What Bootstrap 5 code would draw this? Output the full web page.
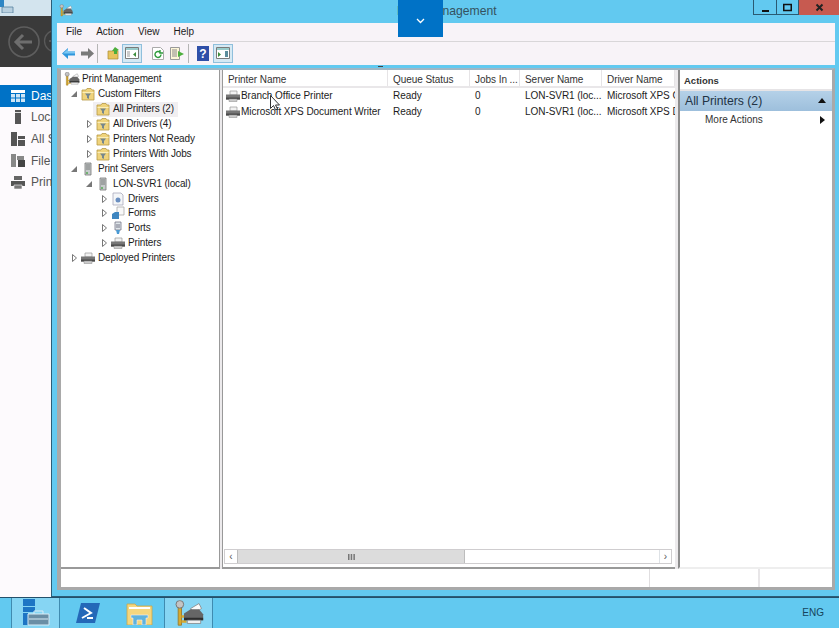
<!DOCTYPE html>
<html lang="en"><head><meta charset="utf-8"><title>Print Management</title>
<link href="https://cdn.jsdelivr.net/npm/bootstrap@5.3.0/dist/css/bootstrap.min.css" rel="stylesheet">
<style>
html,body{height:628px;width:839px;overflow:hidden}
body{font-family:"Liberation Sans",Arial,sans-serif;font-size:10px;color:#1c1c1c;background:#62c9f0;line-height:1}
.desk{height:597px;position:relative}
.side{width:51px;background:#fdfafd;overflow:hidden;white-space:nowrap;font-size:12px;color:#555}
.side-top{height:16px;background:#d3e4ee}
.side-dark{height:51px;background:#3a3a3a;padding:9px 0 0 7px;gap:2px}
.side-nav{padding-top:18px}
.side-row{height:21.6px;padding-left:11px;gap:6px}
.side-row.on{background:#0072c6;color:#fff}
.win{width:788px;background:#62c9f0;border-left:1px solid #2b5d78;border-bottom:1px solid #2b5d78;padding:0 4px 6px 5px}
.titlebar{height:23px;position:relative;font-size:12.2px;color:#34525f}
.appicon{margin:4px 0 0 2px}
.wintitle{position:absolute;left:340px;top:5px}
.caps{margin-right:-4px;margin-left:auto;height:15px}
.cap{height:15px;border:1px solid #2a5a72;border-top:0;background:#62c9f0}
.cap+.cap{border-left:0}
.cap.min{width:24px}.cap.max{width:22px}.cap.cl{width:40px;background:#c75a50;border:0}
.menubar{height:19px;background:#f8f3f8;padding-left:9px;gap:14px;border-bottom:1px solid #d9d6d9}
.toolbar{height:23px;background:#f8f3f8;padding-left:4px}
.tb-sep{width:1px;height:19px;background:#b5b5b5}
.tb-on{width:20px;height:19px;background:#d6e9f4;border:1px solid #90bfdc}
.panes{height:502px;margin-top:3px;background:#eceaec;border:solid #a9a9a9;border-width:2px 3px 0 4px;border-top-color:#9fb6c4}
.tree{width:159px;background:#fff;padding:2px 0 0 3px;border-right:1px solid #999;border-bottom:2px solid #999;letter-spacing:-.15px}
.tr{height:14.92px;white-space:nowrap}
.tw{width:8px;flex:none;display:flex;align-items:center;justify-content:center}
.l1{padding-left:6px}.l2{padding-left:21px}.l3{padding-left:36px}
.tic{width:14px;height:14px;flex:none;margin:0 3px}
.sel{background:#f1eff1;width:85px;height:15px}
.list{width:453px;margin-left:2px;background:#fff;border-left:1px solid #999;border-bottom:2px solid #999;position:relative;overflow:hidden;letter-spacing:-.05px}
.cols{display:grid;grid-template-columns:165px 82px 50px 82px 73px}
.head{height:18px;border-bottom:2px solid #e9e7e9;color:#333}
.head>div{border-right:1px solid #e6e4e6;padding:5px 0 0 5px;overflow:hidden;white-space:nowrap}
.rowx{height:16px;white-space:nowrap}
.rowx>div{padding-left:5px;overflow:hidden;display:flex;align-items:center}
.rowx>div:first-child{padding-left:3px}
.rowx svg{margin-right:1px;flex:none}
.sbar{position:absolute;left:1px;right:3px;bottom:3px;height:15px;background:#fff;border:1px solid #cfcdcf}
.sb-btn{width:12px;color:#555;font-size:10px}
.sb-thumb{width:228px;background:#dcdcdc;border:1px solid #bdbdbd;border-width:0 1px}
.actions{width:154px;margin-left:3px;background:#fff;border-left:2px solid #8d8d8d;border-bottom:2px solid #eee}
.act-h{height:21px;padding:6px 0 0 4px;font-weight:700;font-size:9.5px;border-bottom:2px solid #e6e4e6;color:#333}
.act-sel{height:20px;padding:0 6px 0 5px;background:linear-gradient(#b5d1e8,#9dbfdc);font-size:12.2px;color:#234}
.act-row{height:19px;padding:0 6px 0 25px;color:#333}
.statusbar{height:18px;background:#fff;border:solid #a9a9a9;border-width:0 3px 3px 4px;box-sizing:content-box}
.st1{width:589px;border-right:1px solid #e0dee0}.st2{width:110px;border-right:2px solid #e8e6e8}
.task{height:31px;background:#62c9f0;border-top:1px solid #23506b;padding-left:11px}
.tk{width:49px;height:30px}
.tk.on{background:#86d5f3;border-left:1px solid #3f8bb0;border-right:1px solid #3f8bb0}
.tk.mid{width:55px}
.eng{margin-left:auto;margin-right:15px;color:#16445c}
.drop{position:absolute;left:398px;top:0;width:45px;height:37px;background:#0072c6;z-index:3}
.cursor{position:absolute;left:47px;top:25px;z-index:2}
.tick{position:absolute;left:378px;top:66px;width:5px;height:1px;background:#444}
</style></head><body class="d-flex flex-column">
<svg width="0" height="0" class="position-absolute">
<defs>
<symbol id="ff" viewBox="0 0 14 14"><path d="M1 3h4l1-1.500h4L11 3h2v10H1z" fill="#efd37c" stroke="#b89a45" stroke-width=".8"/><path d="M1.500 5h11v1h-11z" fill="#fbeeb8"/><path d="M4 6.500h6L8 9v3l-2-1V9z" fill="#76878e"/></symbol>
<symbol id="pr" viewBox="0 0 14 14"><path d="M4 2h7v4H4z" fill="#f2f2f2" stroke="#999" stroke-width=".7"/><path d="M0 5.500h14v5H0z" fill="#777"/><path d="M0 8.500h14v2H0z" fill="#4a4a4a"/><path d="M3 10h8v2.500H3z" fill="#ccc" stroke="#888" stroke-width=".5"/></symbol>
<symbol id="sv" viewBox="0 0 14 14"><path d="M4 1h6v12H4z" fill="#c6cbcb" stroke="#777" stroke-width=".8"/><path d="M5 3h4M5 5h4M5 7h4" stroke="#666" stroke-width=".8"/><path d="M5 11h2" stroke="#5a5" stroke-width="1.500"/></symbol>
<symbol id="pm" viewBox="0 0 18 16"><path d="M2.500 4h2v11h-2z" fill="#d8a92e" stroke="#94752a" stroke-width=".5"/><path d="M4.500 9h3v1.500h-3zM4.500 12h3v1.500h-3z" fill="#d8a92e"/><circle cx="3.500" cy="2.500" r="2.300" fill="#c4c4c4" stroke="#777" stroke-width=".6"/><path d="M10 5l5-3 1.500 3-5 3z" fill="#fafafa" stroke="#888" stroke-width=".5"/><path d="M6 8l4-2.500h5l2.500 3V12H6z" fill="#666"/><path d="M6 10.500h11.500V12H6z" fill="#2e2e2e"/><path d="M8 12h8v2H8z" fill="#f0f0f0" stroke="#777" stroke-width=".4"/></symbol>
</defs></svg>

<div class="desk d-flex">
 <aside class="side flex-shrink-0">
  <div class="side-top"><svg width="14" height="13" viewBox="0 0 14 13"><path d="M0 0h4v3H0zM0 3h4v4H0z" fill="#2e86c4"/><path d="M2 7h11v6H2z" fill="#b9d0df" stroke="#56809e" stroke-width=".8"/></svg></div>
  <div class="side-dark d-flex">
   <svg width="34" height="34" viewBox="0 0 34 34" class="flex-shrink-0"><circle cx="17" cy="17" r="15" fill="none" stroke="#5e5e5e" stroke-width="1.600"/><path d="M25 17H10M16 10l-7 7 7 7" fill="none" stroke="#6e6e6e" stroke-width="3"/></svg>
   <svg width="12" height="24" viewBox="0 0 12 24" class="mt-1 flex-shrink-0"><circle cx="12" cy="12" r="10.500" fill="none" stroke="#5a5a5a" stroke-width="1.300"/><path d="M6 12h6" fill="none" stroke="#5a5a5a" stroke-width="2"/></svg>
  </div>
  <div class="side-nav">
   <div class="side-row on d-flex align-items-center"><svg width="14" height="12" viewBox="0 0 14 12" class="flex-shrink-0"><path d="M0 0h14v3H0z" fill="#fff"/><path d="M0 4h4v3.500H0zM5 4h4v3.500H5zM10 4h4v3.500h-4zM0 8.500h4V12H0zM5 8.500h4V12H5zM10 8.500h4V12h-4z" fill="#cfe5f5"/></svg><span>Das</span></div>
   <div class="side-row d-flex align-items-center"><svg width="14" height="14" viewBox="0 0 14 14" class="flex-shrink-0"><path d="M4 0h6v14H4z" fill="#555"/><path d="M4 2h6v1H4z" fill="#ddd"/></svg><span>Loca</span></div>
   <div class="side-row d-flex align-items-center"><svg width="14" height="14" viewBox="0 0 14 14" class="flex-shrink-0"><path d="M0 0h6v14H0zM7 4h7v3H7zM7 8h7v6H7z" fill="#555"/></svg><span>All S</span></div>
   <div class="side-row d-flex align-items-center"><svg width="14" height="13" viewBox="0 0 14 13" class="flex-shrink-0"><path d="M0 0h5v13H0zM6 2h7v4H6z" fill="#888"/><path d="M7 6h7v7H7z" fill="#444"/></svg><span>File</span></div>
   <div class="side-row d-flex align-items-center"><svg width="14" height="13" viewBox="0 0 14 13" class="flex-shrink-0"><path d="M3 0h8v4H3z" fill="#666"/><path d="M0 5h14v5H0z" fill="#555"/><path d="M3 9h8v4H3z" fill="#777" stroke="#fdfafd" stroke-width=".6"/></svg><span>Prin</span></div>
  </div>
 </aside>

 <main class="win d-flex flex-column">
  <div class="titlebar d-flex">
   <svg class="appicon" width="14" height="13" viewBox="0 0 18 16"><use href="#pm"/></svg>
   <span class="wintitle">Print Management</span>
   <div class="caps d-flex">
    <div class="cap min d-flex align-items-center justify-content-center"><svg width="9" height="9" viewBox="0 0 9 9"><path d="M1 7h7v2H1z" fill="#111"/></svg></div>
    <div class="cap max d-flex align-items-center justify-content-center"><svg width="9" height="9" viewBox="0 0 9 9"><path d="M.75 1.500h7.500v6H.75z" fill="none" stroke="#111" stroke-width="1.500"/></svg></div>
    <div class="cap cl d-flex align-items-center justify-content-center"><svg width="9" height="9" viewBox="0 0 9 9"><path d="M1.500 1.500l6 6M7.500 1.500l-6 6" stroke="#222" stroke-width="2"/></svg></div>
   </div>
  </div>
  <nav class="menubar d-flex align-items-center"><span>File</span><span>Action</span><span>View</span><span>Help</span></nav>
  <div class="toolbar d-flex align-items-center">
   <svg width="15" height="13" viewBox="0 0 15 13"><path d="M7 1L1 6.500 7 12V8.500h7v-4H7z" fill="#2f96dc"/><path d="M7 2L2 6.500h12v-2H7z" fill="#7cc6f2"/></svg>
   <svg width="15" height="13" viewBox="0 0 15 13" class="ms-1"><path d="M8 1l6 5.500L8 12V8.500H1v-4h7z" fill="#7a7a7a"/></svg>
   <div class="tb-sep" style="margin-left:2px"></div>
   <svg width="13" height="13" viewBox="0 0 13 13" style="margin-left:9px"><path d="M1 4h10v8H1z" fill="#e8c45c" stroke="#a88a35" stroke-width=".7"/><path d="M8 0l4 3-2 1v3H7V4H5z" fill="#4cae3c"/></svg>
   <div class="tb-on d-flex align-items-center justify-content-center" style="margin-left:2px"><svg width="14" height="12" viewBox="0 0 14 12"><path d="M.5.500h13v11H.500z" fill="#fff" stroke="#7a7a7a"/><path d="M1 1h12v2H1z" fill="#9cc"/><path d="M2 4h3v6H2z" fill="#ccc"/><path d="M11 5L8 7.500 11 10z" fill="#3c8d3c"/></svg></div>
   <svg width="12" height="13" viewBox="0 0 12 13" style="margin-left:10px"><path d="M.5.500h8l3 3v9H.500z" fill="#fff" stroke="#aaa"/><path d="M9 7.500a3 3 0 1 1-1-2.300M8 3v3h3" fill="none" stroke="#2d9a3a" stroke-width="1.400"/></svg>
   <svg width="15" height="13" viewBox="0 0 15 13" style="margin-left:6px"><path d="M.5.500h9v12h-9z" fill="#fdf6d8" stroke="#999"/><path d="M2 3h5M2 5h5M2 7h5M2 9h5" stroke="#888"/><path d="M8 4l6 3-6 3z" fill="#4cae3c"/></svg>
   <div class="tb-sep" style="margin-left:3px"></div>
   <svg width="12" height="15" viewBox="0 0 12 15" style="margin-left:8px"><path d="M0 0h12v15H0z" fill="#2f4fa8"/><text x="6" y="12" text-anchor="middle" font-family="Liberation Sans" font-size="12" font-weight="700" fill="#fff">?</text></svg>
   <div class="tb-on d-flex align-items-center justify-content-center" style="margin-left:4px"><svg width="14" height="12" viewBox="0 0 14 12"><path d="M.5.500h13v11H.500z" fill="#fff" stroke="#7a7a7a"/><path d="M1 1h12v2H1z" fill="#9cc"/><path d="M2 5l3 2.500L2 10z" fill="#3c8d3c"/><path d="M9 4h3v6H9z" fill="#5c8d9c"/></svg></div>
  </div>

  <div class="panes d-flex">
   <section class="tree">
    <div class="tr d-flex align-items-center"><svg class="tic" style="width:16px;margin:0 2px 0 0" viewBox="0 0 18 16"><use href="#pm"/></svg>Print Management</div>
    <div class="tr l1 d-flex align-items-center"><span class="tw"><svg width="6" height="6"><path d="M6 0v6H0z" fill="#777"/></svg></span><svg class="tic"><use href="#ff"/></svg>Custom Filters</div>
    <div class="tr l2 d-flex align-items-center"><span class="tw"></span><div class="sel d-flex align-items-center"><svg class="tic"><use href="#ff"/></svg>All Printers (2)</div></div>
    <div class="tr l2 d-flex align-items-center"><span class="tw"><svg width="5" height="8"><path d="M.5.500l4 3.500-4 3.500z" fill="#fff" stroke="#777"/></svg></span><svg class="tic"><use href="#ff"/></svg>All Drivers (4)</div>
    <div class="tr l2 d-flex align-items-center"><span class="tw"><svg width="5" height="8"><path d="M.5.500l4 3.500-4 3.500z" fill="#fff" stroke="#777"/></svg></span><svg class="tic"><use href="#ff"/></svg>Printers Not Ready</div>
    <div class="tr l2 d-flex align-items-center"><span class="tw"><svg width="5" height="8"><path d="M.5.500l4 3.500-4 3.500z" fill="#fff" stroke="#777"/></svg></span><svg class="tic"><use href="#ff"/></svg>Printers With Jobs</div>
    <div class="tr l1 d-flex align-items-center"><span class="tw"><svg width="6" height="6"><path d="M6 0v6H0z" fill="#777"/></svg></span><svg class="tic"><use href="#sv"/></svg>Print Servers</div>
    <div class="tr l2 d-flex align-items-center"><span class="tw"><svg width="6" height="6"><path d="M6 0v6H0z" fill="#777"/></svg></span><svg class="tic"><use href="#sv"/></svg>LON-SVR1 (local)</div>
    <div class="tr l3 d-flex align-items-center"><span class="tw"><svg width="5" height="8"><path d="M.5.500l4 3.500-4 3.500z" fill="#fff" stroke="#777"/></svg></span><svg class="tic" viewBox="0 0 14 14"><path d="M2 1h8l2 2v10H2z" fill="#f4f6f8" stroke="#aab" stroke-width=".8"/><circle cx="7" cy="8" r="2.500" fill="#6b8fc0"/></svg>Drivers</div>
    <div class="tr l3 d-flex align-items-center"><span class="tw"><svg width="5" height="8"><path d="M.5.500l4 3.500-4 3.500z" fill="#fff" stroke="#777"/></svg></span><svg class="tic" viewBox="0 0 14 14"><path d="M6 1h7v8H6z" fill="#f8f8f8" stroke="#aaa" stroke-width=".8"/><path d="M1 8l3-2h4v7H1z" fill="#3f86c0"/></svg>Forms</div>
    <div class="tr l3 d-flex align-items-center"><span class="tw"><svg width="5" height="8"><path d="M.5.500l4 3.500-4 3.500z" fill="#fff" stroke="#777"/></svg></span><svg class="tic" viewBox="0 0 14 14"><path d="M4 1h6v8H4z" fill="#dfe6ea" stroke="#778" stroke-width=".8"/><path d="M6 3v4M8 3v4" stroke="#778"/><path d="M5 9h4l-1 4H6z" fill="#4a9ad4"/></svg>Ports</div>
    <div class="tr l3 d-flex align-items-center"><span class="tw"><svg width="5" height="8"><path d="M.5.500l4 3.500-4 3.500z" fill="#fff" stroke="#777"/></svg></span><svg class="tic"><use href="#pr"/></svg>Printers</div>
    <div class="tr d-flex align-items-center" style="padding-left:6px"><span class="tw"><svg width="5" height="8"><path d="M.5.500l4 3.500-4 3.500z" fill="#fff" stroke="#777"/></svg></span><svg class="tic"><use href="#pr"/></svg>Deployed Printers</div>
   </section>

   <section class="list">
    <div class="cols head"><div>Printer Name</div><div>Queue Status</div><div>Jobs In ...</div><div>Server Name</div><div>Driver Name</div></div>
    <div class="cols rowx"><div><svg width="14" height="14"><use href="#pr"/></svg>Branch Office Printer</div><div>Ready</div><div>0</div><div>LON-SVR1 (loc...</div><div>Microsoft XPS C</div></div>
    <div class="cols rowx"><div><svg width="14" height="14"><use href="#pr"/></svg>Microsoft XPS Document Writer</div><div>Ready</div><div>0</div><div>LON-SVR1 (loc...</div><div>Microsoft XPS D</div></div>
    <svg class="cursor" width="11" height="16" viewBox="0 0 11 16"><path d="M.5.500v13l3-3 2 4.500 2-1-2-4h4z" fill="#fff" stroke="#333"/></svg>
    <div class="sbar d-flex">
     <div class="sb-btn d-flex align-items-center justify-content-center">‹</div>
     <div class="sb-thumb d-flex align-items-center justify-content-center"><svg width="7" height="6" viewBox="0 0 7 6"><path d="M0 0h1.500v6H0zM2.700 0h1.500v6H2.700zM5.400 0h1.500v6H5.400z" fill="#777"/></svg></div>
     <div class="flex-grow-1"></div>
     <div class="sb-btn d-flex align-items-center justify-content-center border-start">›</div>
    </div>
   </section>

   <section class="actions">
    <div class="act-h">Actions</div>
    <div class="act-sel d-flex align-items-center justify-content-between"><span>All Printers (2)</span><svg width="8" height="5"><path d="M4 0l4 5H0z" fill="#111"/></svg></div>
    <div class="act-row d-flex align-items-center justify-content-between"><span>More Actions</span><svg width="5" height="8" style="margin-right:1px"><path d="M0 0l5 4-5 4z" fill="#111"/></svg></div>
   </section>
  </div>
  <div class="statusbar d-flex"><div class="st1"></div><div class="st2"></div></div>
 </main>
 <div class="drop d-flex align-items-center justify-content-center"><svg width="9" height="6" viewBox="0 0 9 6" class="mt-1"><path d="M1 1l3.500 3.500L8 1" fill="none" stroke="#fff" stroke-width="1.300"/></svg></div>
 <div class="tick"></div>
</div>

<footer class="task d-flex align-items-center">
 <div class="tk on d-flex align-items-center justify-content-center"><svg width="28" height="28" viewBox="0 0 28 28"><path d="M1 0h12v7H1zM1 8h12v5H1zM1 14h5v12H1z" fill="#1d75c4"/><path d="M6 15h21v11H6z" fill="#6a8ea5" stroke="#d8ecf6"/><path d="M12 15v-3h9v3" fill="none" stroke="#d8ecf6"/><path d="M7 20h19" stroke="#d8ecf6"/></svg></div>
 <div class="tk mid d-flex align-items-center justify-content-center"><svg width="24" height="20" viewBox="0 0 24 20"><path d="M5 0h19l-5 20H0z" fill="#2468b8"/><path d="M8 5l7 5-9 5" fill="none" stroke="#fff" stroke-width="2"/><path d="M11 15h6" stroke="#fff" stroke-width="2"/></svg></div>
 <div class="tk mid d-flex align-items-center justify-content-center" style="width:49px"><svg width="27" height="23" viewBox="0 0 27 23"><path d="M1 2h8l2 2h15v19H1z" fill="#f4d67e" stroke="#c9a64a" stroke-width=".8"/><path d="M3 5h21v2H3z" fill="#fff"/><path d="M5 13h17v3h-2v7h-4v-5h-5v5H7v-7H5z" fill="#5fb2dc" stroke="#eef" stroke-width=".6"/></svg></div>
 <div class="tk on d-flex align-items-center justify-content-center"><svg width="30" height="27" viewBox="0 0 18 16"><use href="#pm"/></svg></div>
 <span class="eng">ENG</span>
</footer>
</body></html>
